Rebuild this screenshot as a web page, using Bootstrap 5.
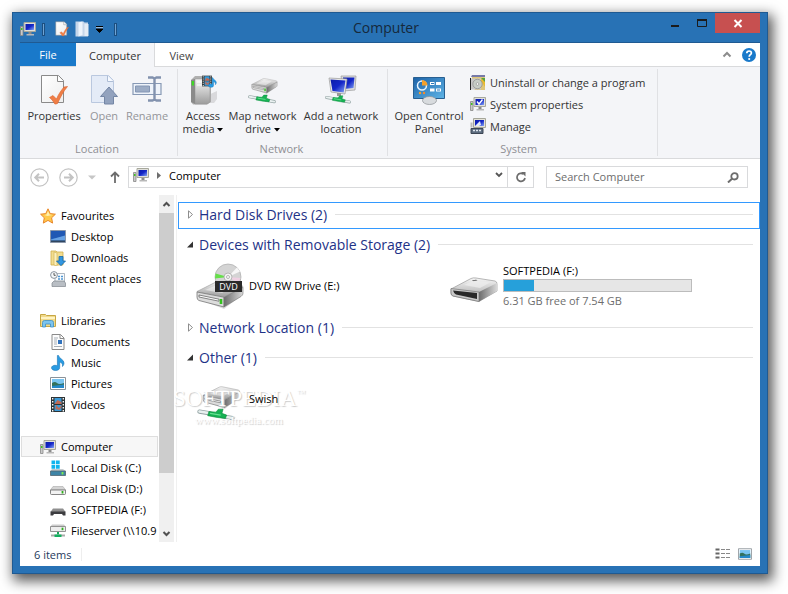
<!DOCTYPE html>
<html lang="en">
<head>
<meta charset="utf-8">
<meta name="viewport" content="width=device-width, initial-scale=1">
<title>Computer</title>
<link href="https://cdn.jsdelivr.net/npm/bootstrap@5.3.0/dist/css/bootstrap.min.css" rel="stylesheet">
<style>
:root{--frame:#2872b5;--frame-dark:#1f5a92;--rule:#d9dadc;--ribbon:#f4f5f8}
body{font:11px/13px "Open Sans","Noto Sans",sans-serif;color:#000;background:#fff;padding:12px 20px 20px 12px}
button{font:inherit;color:inherit;background:none;border:0;padding:0}
a{color:inherit;text-decoration:none}
svg{display:block;flex:none}
.win{min-height:calc(100vh - 33px);background:var(--frame);border:1px solid var(--frame-dark);padding:0 7px 7px;box-shadow:3px 5px 12px 2px rgba(0,0,0,.65)}
.titlebar{height:29px;color:#16293b}
.titlebar h1{font-size:14px;line-height:30px;font-weight:400}
.quick{width:104px;gap:6px}
.sep{width:3px;height:13px;border:1px solid #1c4f80;background:#6fa3d3}
.winbtns{width:112px;height:20px}
.winbtns button{width:27px;height:20px}
.winbtns .close-btn{width:45px;background:#c75050}
.pane{background:#fff;border-top:1px solid var(--frame-dark)}
.tabs{height:24px;border-bottom:1px solid var(--rule)}
.tabs button{height:24px;line-height:26px;color:#444}
.tabs .file{width:56px;background:#1979ca;color:#fff;height:23px;line-height:24px}
.tabs .on{width:79px;background:var(--ribbon);border-right:1px solid var(--rule);color:#333}
.tabs .view{width:53px}
.ribbon{height:92px;background:var(--ribbon);border-bottom:1px solid var(--rule);color:#333;padding-top:2px}
.rgroup{border-right:1px solid #e0e1e4;height:87px;padding:2px 4px 0}
.rgroup .caption{color:#8f8f94;line-height:16px}
.big{display:flex;flex-direction:column;align-items:center;height:70px;padding-top:4px;text-align:center;white-space:nowrap}
.big svg{margin-bottom:4px}
.big:disabled{color:#939499}
.w-s{width:46px}.w-m{width:60px}.w-l{width:74px}.w-n{width:73px}.w-xl{width:84px}.w-open{width:40px}
.g-loc{padding-right:7px}.g-net{padding-left:2px}.g-sys{padding-right:12px}
.line-btn{display:flex;align-items:center;gap:4px;height:22px;white-space:nowrap}
.location{height:36px;padding:0 12px 0 10px}
.field{height:22px;border:1px solid var(--rule);background:#fff}
.refresh{width:26px;padding-left:8px}
.searchbox{width:202px;margin-left:12px}
.searchbox input{border:0;outline:0;min-width:0;padding:0 0 0 8px;color:#555;line-height:18px}
.searchbox input::placeholder{color:#6d6d6d;opacity:1}
.navicons{width:98px;gap:10px}
.tree{width:138px;padding:10px 0 0 1px;height:347px;overflow:hidden}
.tree a{display:flex;align-items:center;height:21px;gap:5px;padding-left:18px;white-space:nowrap;border:1px solid transparent}
.tree a.sub{padding-left:28px}
.tree a.picked{background:#f7f7f7;border-color:#dedede}
.tree .block{margin-bottom:21px}
.scroller{width:15px;background:#f0f0f0;margin-left:1px}
.scroller button{height:18px;width:15px}
.thumb{background:#cdcdcd;height:75%}
.files{border-left:1px solid #f0f0f0;margin-left:2px;padding:7px 0 0 1px}
.ghead{height:27px;margin-bottom:3px;padding:0 6px 2px 7px;border:1px solid transparent;width:100%;gap:4px;color:#1e3287;font-size:14px;white-space:nowrap}
.ghead::after{content:"";height:1px;flex:1;background:#e2e2e2;margin-left:4px}
.ghead.focused{border-color:#3399ff}
.ghead svg{width:9px}
.items{height:53px;padding:0 0 6px 18px}
.tile{width:254px;gap:5px}
.tile .pic{width:48px}
.drive-info{gap:2px}
.meter{width:189px;height:13px;border:1px solid #bcbcbc;background:#e6e6e6;border-radius:0}
.meter .progress-bar{background:#26a0da}
.muted{color:#6d6d6d}
.stamp{left:-23px;top:1px;width:140px;color:#fff;text-shadow:1px 1px 1px #ccc;font-family:"Liberation Serif",serif;pointer-events:none}
.stamp b{font-weight:400;font-size:23px;line-height:24px;display:block}
.stamp sup{font-size:9px;top:-10px}
.stamp i{font-style:normal;font-size:11px;line-height:18px;display:block;padding-left:22px}
.status{height:24px;color:#1e395b;padding:0 8px 0 14px}
.status .count{border-right:1px solid #eee;padding-right:10px}
</style>
</head>
<body>
<svg width="0" height="0" class="position-absolute" aria-hidden="true">
<defs>
<linearGradient id="scr" x2="1" y2="1"><stop offset="0" stop-color="#0c1ca8"/><stop offset=".5" stop-color="#1426c8"/><stop offset="1" stop-color="#86a6f4"/></linearGradient>
<linearGradient id="metal" x2="0" y2="1"><stop offset="0" stop-color="#f6f6f6"/><stop offset="1" stop-color="#9c9c9c"/></linearGradient>
<linearGradient id="side" x2="1"><stop offset="0" stop-color="#6d6d6d"/><stop offset="1" stop-color="#d8d8d8"/></linearGradient>
<linearGradient id="blue" x2="1" y2="1"><stop offset="0" stop-color="#1c62a8"/><stop offset="1" stop-color="#5fb4e6"/></linearGradient>
<linearGradient id="page" x2="1" y2="1"><stop offset="0" stop-color="#fff"/><stop offset="1" stop-color="#eee"/></linearGradient>
<symbol id="pc" viewBox="0 0 16 14"><path d="M4 .5h11.500v9H4z" fill="#e0e0dc" stroke="#a7a89c"/><path d="M5.500 2h8.500v6H5.500z" fill="url(#scr)"/><path d="M8.500 10h3v2h-3z" fill="#8b8b8b"/><path d="M6.500 12h7.500v1.500H6.500z" fill="#b8b8b8"/><path d="M.5 4.500h2.500v9H.5z" fill="#c9c9c9" stroke="#888" stroke-width=".8"/><path d="M1 6h1.500v2H1z" fill="#42c522"/></symbol>
<symbol id="doccheck" viewBox="0 0 28 30"><path d="M1.500.5h17l5 5V27.500h-22z" fill="url(#page)" stroke="#8a8a8a"/><path d="M17.500 1v5.500h5.500" fill="#fff" stroke="#8a8a8a"/><path d="M9.500 22.500l3.500-2 3.500 3.500c2-5 5-9 7.500-12l3.500-.5C23 17 20.500 22 17.500 28.500c-2.500 1-3 .5-3 0-1.500-2.500-3-4.500-5-6z" fill="#ef7e46" stroke="#dc622c" stroke-width=".6"/></symbol>
<symbol id="open" viewBox="0 0 28 30"><path d="M1.500.5h17l5 5V27.500h-22z" fill="#e4ebf7" stroke="#bac8df"/><path d="M17.500 1v5.500h5.500" fill="#f7faff" stroke="#aebdd5"/><path d="M19 12l8.500 9.500h-4V29h-9v-7.500h-4z" fill="#92a2be" stroke="#7486a5"/></symbol>
<symbol id="rename" viewBox="0 0 30 28"><path d="M1 7.500h28v11H1z" fill="#eef3fa" stroke="#8799b5" stroke-width="1.200"/><path d="M3.500 10h14v6h-14z" fill="#9cacc5" stroke="#8496b4"/><path d="M16 1.500h4.500l2 1 2-1H29M16 24.500h4.500l2-1 2 1H29M22.500 2v22" fill="none" stroke="#8292ae" stroke-width="2.400"/></symbol>
<symbol id="note" viewBox="0 0 14 16"><path d="M7.500.5c.5 3 5.500 4 5.500 7.500 0 1.500-.8 2.800-1.500 3.500.4-2.800-.8-4-2.800-4.500v5.500C8.700 14.500 7 15.500 4.500 15.500S.5 14.200.5 12.800 2.200 10.300 4 10.300c1 0 1.800.2 2.400.5V.5z" fill="#299be2" stroke="#1573b6" stroke-width=".6"/></symbol>
<symbol id="film" viewBox="0 0 14 15"><path d="M0 0h14v15H0z" fill="#2d3436"/><path d="M3.500 1h7v6h-7zM3.500 8h7v6h-7z" fill="#3b9ad8"/><path d="M3.500 7l3-4 4 2v2zM5 8l3 3 2.500-3v2l-2 3-4-1z" fill="#c06a55"/><path d="M1.700 1v14M12.300 1v14" stroke="#fff" stroke-width="1.300" stroke-dasharray="1.500 1.500"/></symbol>
<symbol id="media" viewBox="0 0 30 30"><path d="M3 28h23l3-4v-8z" fill="#888" opacity=".25"/><path d="M3 5l4-4h14l2 1v25l-4 2.500H5L3 27z" fill="#b0b0b0"/><path d="M7 4h13l2 2v21l-3 2H7z" fill="url(#metal)" stroke="#999" stroke-width=".6"/><path d="M3 5l4-1v25l-4-2z" fill="#8a8a8a"/><path d="M9 7h6M9 10h10" stroke="#fff"/><path d="M4.800 6v4.500" stroke="#3cdb22" stroke-width="2.200"/><use href="#film" x="14" y="0" width="10" height="12"/><use href="#note" x="20" y="1" width="9" height="13"/></symbol>
<symbol id="pipe" viewBox="0 0 32 11"><path d="M2 3l9 1.500M21 7l9 1.500" stroke="#93a3a3" stroke-width="3.600" stroke-linecap="round"/><path d="M2 3l9 1.500M21 7l9 1.500" stroke="#e9f0f0" stroke-width="2.200" stroke-linecap="round"/><path d="M10 3l6 .5 2-2.500h4l-1 3.500 4 1.500-1 2.800-7-.8-8-1.500z" fill="#17b254" stroke="#0a8c3c" stroke-width=".5"/><path d="M11 4.500l9 1.500" stroke="#6ae294"/></symbol>
<symbol id="drive" viewBox="0 0 48 29"><path d="M2 19l26 10 18-14v-5L28 22z" fill="#777" opacity=".25"/><path d="M1 11.500L21 1.500q2-1 4-.5l20 4q2 .5 2 2.500L28 17 1 12z" fill="url(#metal)" stroke="#a2a2a2" stroke-width=".7"/><path d="M1 12l27 5.200V27L3 20.500Q1 20 1 17z" fill="#dcdcdc" stroke="#777" stroke-width=".8"/><path d="M28 17.200L47 7.500v6Q47 15 45 16.500L28 27z" fill="url(#side)" stroke="#777" stroke-width=".6"/><path d="M3 15l20 4.200v2L3 17z" fill="#fff" stroke="#555" stroke-width=".7"/><path d="M25 19v5" stroke="#35c31e" stroke-width="2.600"/><path d="M9 10L23 4l14 2.500L26 13z" fill="#fff" opacity=".45"/></symbol>
<symbol id="netdrive" viewBox="0 0 30 30"><use href="#drive" x="3" y="3" width="27" height="16"/><use href="#pipe" x="0" y="19" width="28" height="10"/></symbol>
<symbol id="netpc" viewBox="0 0 34 30"><path d="M17 1h15l-1 14-12 1z" fill="#dedede" stroke="#999" stroke-width=".7"/><path d="M19 2.500h11.500l-1 10.500-10 1z" fill="url(#scr)"/><path d="M5 3l18 1-2 15-14-2z" fill="#e8e8e8" stroke="#999" stroke-width=".7"/><path d="M6.500 4.500l15 1-1.800 12L8.500 16z" fill="url(#scr)"/><path d="M13 18h4v3h-4z" fill="#999"/><use href="#pipe" x="0" y="20" width="28" height="9"/></symbol>
<symbol id="panel" viewBox="0 -2 32 30"><path d="M.5.5h31V21.500H.5z" fill="url(#blue)" stroke="#285f91"/><circle cx="9" cy="8.500" r="4.500" fill="none" stroke="#e7f4ff" stroke-width="1.500"/><path d="M9 8.500V3a5.500 5.500 0 0 1 5.500 5.500z" fill="#f5a02a"/><path d="M17 6.500h4.500M23 6.500h5M17 13h4.500M23 13h5" stroke="#fff" stroke-width="3"/><path d="M18 6.500h3M24 13h3" stroke="#2a76b8" stroke-width="1.200"/><circle cx="7" cy="16" r="1.200" fill="#f5a02a"/><circle cx="11" cy="16" r="1.200" fill="#f58b2a"/><ellipse cx="16.500" cy="23.500" rx="7" ry="4" fill="#d8dbde" stroke="#8b8f93" stroke-width=".7"/></symbol>
<symbol id="uninst" viewBox="0 0 16 16"><path d="M2 1h12l1 3v12H5L2 12z" fill="#dfc67a"/><path d="M2 1h13v2H1z" fill="#777aa8"/><path d="M10 5h5v8z" fill="#e8ba31"/><path d="M11 4l4 4v-4z" fill="#57a340"/><path d="M1 4.500h10v11H1z" fill="#c9c9c9"/><path d="M.5 4v12" stroke="#222"/><circle cx="7.500" cy="10" r="4.700" fill="#c6ccc6" stroke="#888" stroke-width=".7"/><circle cx="7.500" cy="10" r="1.300" fill="#fff" stroke="#777" stroke-width=".5"/></symbol>
<symbol id="sysprop" viewBox="0 0 16 14"><use href="#pc" width="16" height="14"/><path d="M7 4.500l2 2.500 3.500-4.500" fill="none" stroke="#fff" stroke-width="1.400"/></symbol>
<symbol id="manage" viewBox="0 0 16 16"><path d="M3.500.5h12v9h-12z" fill="#e4e2d6" stroke="#a5a69a"/><path d="M5 2h9v6H5z" fill="url(#scr)"/><path d="M5 8l5-5 1 4-2 1z" fill="#e4ebf8"/><path d="M.5 4.500h2v5h-2z" fill="#bbb"/><path d="M1 10.500h12V15.500H1z" fill="#5d6d80" stroke="#3c4654"/><path d="M3 12.500h8" stroke="#e0e6ee" stroke-width="1.500" stroke-dasharray="2 1"/></symbol>
<symbol id="star" viewBox="0 0 16 16"><path d="M8 .8l2.200 4.800 5.200.6-3.800 3.600 1 5.300L8 12.400l-4.700 2.700 1-5.300L.6 6.200l5.200-.6z" fill="#ffc94a" stroke="#e8862a"/><path d="M8 3l1.500 3.500 3 .5-5 1-3-1 2-.5z" fill="#fff0b0"/></symbol>
<symbol id="desk" viewBox="0 0 16 13"><path d="M.5.5h15v12H.5z" fill="#2c6fc4" stroke="#8a97ab"/><path d="M1 1h14v5L1 9z" fill="#2058b4"/><path d="M1 9.500l14-4v5H1z" fill="#68a2e4"/><path d="M1 10.500h14v1.500H1z" fill="#30465f"/></symbol>
<symbol id="down" viewBox="0 0 16 16"><path d="M1 1h5l1 1h6v13H1z" fill="#f2dd90" stroke="#cfae4c" stroke-width=".8"/><path d="M4 2v13l3 1V3z" fill="#fbf0bf" stroke="#cfae4c" stroke-width=".6"/><path d="M9 6.500h4V11h2.500L11 15.700 6.500 11H9z" fill="#3296e0" stroke="#1768a8" stroke-width=".8"/></symbol>
<symbol id="recent" viewBox="0 0 16 16"><path d="M5 2.500h9.500v11H5z" fill="#f8fbfe" stroke="#9aa5b0" stroke-width=".8"/><path d="M8 5.500h2M11 5.500h2M8 8h2M11 8h2" stroke="#4e96d2" stroke-width="1.500"/><path d="M2 12l2-2h10l1.500 2v3.500H2z" fill="#b9bec4" stroke="#7f868e" stroke-width=".7"/><circle cx="4" cy="4" r="3.400" fill="#f5f8fa" stroke="#8a949e"/><path d="M4 2v2.300h1.700" fill="none" stroke="#555"/></symbol>
<symbol id="lib" viewBox="0 0 16 15"><path d="M.5 1.500h5l1 1h9v11H.5z" fill="#f0d98a" stroke="#c7a744"/><path d="M1 5h14" stroke="#fff3c2" stroke-width="2"/><path d="M2.500 14V9.500q0-2 2-2h7q2 0 2 2V14h-3v-3h-5v3z" fill="#7cc4ee" stroke="#3e8fc6" stroke-width=".8"/></symbol>
<symbol id="docs" viewBox="0 0 14 16"><path d="M1 .5h8.500l3.500 3.500v11.500H1z" fill="#fcfcfc" stroke="#8a8a8a"/><path d="M9 .5V4.500h4" fill="none" stroke="#8a8a8a"/><path d="M3 4h4M3 6h3M3 8h3M3 10h3M3 12.500h8" stroke="#a8b0b8"/><path d="M7 6h4v4H7z" fill="#2f72bd"/></symbol>
<symbol id="pics" viewBox="0 0 16 13"><path d="M.5.5h15v12H.5z" fill="#fff" stroke="#8b9299"/><path d="M2 2h12v9H2z" fill="#79c4f0"/><path d="M2 6q3-2 5 0t7 0v5H2z" fill="#33715c"/><path d="M2 9l12-1.500V11H2z" fill="#2488c9"/></symbol>
<symbol id="hdd" viewBox="0 0 16 9"><path d="M3 .5h10l2.500 3.500H.5z" fill="#d4d4d4" stroke="#aaa" stroke-width=".6"/><path d="M.5 4h15v3.500q0 1-1 1h-13q-1 0-1-1z" fill="#f2f2f2" stroke="#777" stroke-width=".9"/><path d="M12.500 5v2.500" stroke="#2fae1c" stroke-width="1.800"/></symbol>
<symbol id="hddc" viewBox="0 0 16 16"><path d="M1.500.5h3.700v3.700H1.500zM6 .5h3.700v3.700H6zM1.500 5h3.700v3.700H1.500zM6 5h3.700v3.700H6z" fill="#10b4ee"/><path d="M2 9h11l2.500 2H.5z" fill="#c5ccd0"/><path d="M.5 11h15v4.500H.5z" fill="#3e84a6" stroke="#526470" stroke-width=".8"/><path d="M12.500 12v2.500" stroke="#7ef04e" stroke-width="1.800"/></symbol>
<symbol id="usb" viewBox="0 0 16 8"><path d="M3 .5h10L15.500 4H.5z" fill="#8f8f8f"/><path d="M.5 3.500h15v4H13l-1-1.500H4L3 7.500H.5z" fill="#3d3d40"/></symbol>
<symbol id="server" viewBox="0 0 16 14"><path d="M2 .5h12l1.500 2H.5z" fill="#ccc"/><path d="M.5 2.500h15v5H.5z" fill="#eee" stroke="#888" stroke-width=".9"/><path d="M12.500 3.700v2.500" stroke="#2fae1c" stroke-width="1.800"/><path d="M7 8h2v2.500H7z" fill="#17a65a"/><path d="M1 11.500h14" stroke="#aaa" stroke-width="2"/><path d="M4.500 10.500h7v2.500h-7z" fill="#14b060"/></symbol>
</defs>
</svg>

<div class="win d-flex flex-column">
  <header class="titlebar d-flex justify-content-between align-items-start">
    <div class="quick d-flex align-items-center pt-2">
      <svg width="16" height="14"><use href="#pc"/></svg>
      <span class="sep"></span>
      <button aria-label="Properties" class="ms-1"><svg width="14" height="16"><use href="#doccheck"/></svg></button>
      <button aria-label="New folder"><svg width="14" height="16" viewBox="0 0 14 16"><path d="M.5.500h8l1 1h3.500v14H.5z" fill="#c6d6ea"/><path d="M3.500 1.500l4-1V14l-4 1.500z" fill="#edf4fc"/><path d="M9.500 3h4v12h-4z" fill="#e4ecf5"/></svg></button>
      <button aria-label="Customize"><svg width="9" height="8" viewBox="0 0 9 8"><path d="M1 1.500h7M1 4h7L4.500 7.500z" fill="#000" stroke="#000"/><path d="M1 2.700h7" stroke="#d6e4f1" stroke-width=".8"/></svg></button>
      <span class="sep ms-1"></span>
    </div>
    <h1 class="m-0">Computer</h1>
    <div class="winbtns d-flex justify-content-end">
      <button aria-label="Minimize"><svg width="27" height="20"><path d="M10 13h8" stroke="#1b1b1b" stroke-width="2"/></svg></button>
      <button aria-label="Maximize"><svg width="27" height="20"><path d="M9.500 7.500h9v6h-9z" fill="none" stroke="#1b1b1b"/><path d="M9 7h10" stroke="#1b1b1b" stroke-width="2"/></svg></button>
      <button aria-label="Close" class="close-btn"><svg width="45" height="20"><path d="M19.500 7l7 7m0-7l-7 7" stroke="#fff" stroke-width="2"/></svg></button>
    </div>
  </header>

  <div class="pane flex-grow-1 d-flex flex-column">
    <div class="tabs d-flex">
      <button class="file">File</button>
      <button class="on">Computer</button>
      <button class="view">View</button>
      <div class="ms-auto d-flex align-items-center pe-1">
        <button aria-label="Collapse ribbon"><svg width="12" height="10"><path d="M1.500 6.500L5 3l3.500 3.500" fill="none" stroke="#8c8c8c" stroke-width="2"/></svg></button>
        <button aria-label="Help" class="ms-2"><svg width="14" height="14"><circle cx="7" cy="7" r="7" fill="#1979ca"/><path d="M4.800 5.300C4.800 2.300 9.400 2.300 9.400 5c0 1.700-2.200 1.800-2.200 3.800" fill="none" stroke="#fff" stroke-width="1.700"/><circle cx="7.200" cy="11" r="1.100" fill="#fff"/></svg></button>
      </div>
    </div>

    <div class="ribbon d-flex">
      <section class="rgroup g-loc">
        <div class="d-flex">
          <button class="big w-m"><svg width="28" height="30"><use href="#doccheck"/></svg>Properties</button>
          <button class="big w-open" disabled><svg width="28" height="30"><use href="#open"/></svg>Open</button>
          <button class="big w-s" disabled><svg width="30" height="30"><use href="#rename"/></svg>Rename</button>
        </div>
        <div class="caption text-center">Location</div>
      </section>
      <section class="rgroup g-net">
        <div class="d-flex">
          <button class="big w-s"><svg width="30" height="30"><use href="#media"/></svg>Access<span>media <svg class="d-inline-block m-0 align-middle" width="6" height="4"><path d="M0 0h6L3 3.500z"/></svg></span></button>
          <button class="big w-n"><svg width="30" height="30"><use href="#netdrive"/></svg>Map network<span>drive <svg class="d-inline-block m-0 align-middle" width="6" height="4"><path d="M0 0h6L3 3.500z"/></svg></span></button>
          <button class="big w-xl"><svg width="34" height="30"><use href="#netpc"/></svg>Add a network<span>location</span></button>
        </div>
        <div class="caption text-center">Network</div>
      </section>
      <section class="rgroup g-sys">
        <div class="d-flex">
          <button class="big w-l me-1"><svg width="32" height="30"><use href="#panel"/></svg>Open Control<span>Panel</span></button>
          <div>
            <button class="line-btn"><svg width="16" height="16"><use href="#uninst"/></svg>Uninstall or change a program</button>
            <button class="line-btn"><svg width="16" height="14"><use href="#sysprop"/></svg>System properties</button>
            <button class="line-btn"><svg width="16" height="16"><use href="#manage"/></svg>Manage</button>
          </div>
        </div>
        <div class="caption text-center">System</div>
      </section>
    </div>

    <div class="location d-flex align-items-center">
      <div class="navicons d-flex align-items-center">
        <button aria-label="Back"><svg width="19" height="19" fill="none" stroke="#c3c3c3"><circle cx="9.500" cy="9.500" r="8.700" stroke-width="1.200"/><path d="M14 9.500H6M9 5.800L5.300 9.500 9 13.200" stroke-width="2"/></svg></button>
        <button aria-label="Forward"><svg width="19" height="19" fill="none" stroke="#c3c3c3"><circle cx="9.500" cy="9.500" r="8.700" stroke-width="1.200"/><path d="M5 9.500h8M10 5.800l3.700 3.700-3.700 3.700" stroke-width="2"/></svg></button>
        <button aria-label="Recent locations"><svg width="8" height="5"><path d="M0 .500h8L4 4.500z" fill="#c6c6c6"/></svg></button>
        <button aria-label="Up" class="ms-1"><svg width="10" height="12"><path d="M5 12V2M1 5.500L5 1.500l4 4" fill="none" stroke="#6d6d6d" stroke-width="1.800"/></svg></button>
      </div>
      <div class="field flex-grow-1 d-flex align-items-center pb-1">
        <svg width="16" height="14" class="mx-1"><use href="#pc"/></svg>
        <svg width="4" height="7" class="ms-1"><path d="M0 0l4 3.500L0 7z" fill="#6d6d6d"/></svg>
        <span class="ms-2">Computer</span>
        <button aria-label="Previous locations" class="ms-auto me-1"><svg width="8" height="6"><path d="M1 1l3 3 3-3" fill="none" stroke="#555" stroke-width="1.800"/></svg></button>
      </div>
      <button aria-label="Refresh" class="field refresh border-start-0"><svg width="10" height="11"><path d="M7.500 2.200A4 4 0 1 0 9 6" fill="none" stroke="#6d6d6d" stroke-width="1.700"/><path d="M5 0h4.500v4.500z" fill="#6d6d6d"/></svg></button>
      <div class="field searchbox d-flex align-items-center pe-2">
        <input type="text" class="flex-grow-1" placeholder="Search Computer" aria-label="Search Computer">
        <svg width="12" height="11" fill="none" stroke="#6d6d6d"><circle cx="7.500" cy="4.300" r="3.200" stroke-width="1.800"/><path d="M5 6.800L1 10.500" stroke-width="2"/></svg>
      </div>
    </div>

    <div class="d-flex flex-grow-1">
      <nav class="tree">
        <div class="block">
          <a href="#"><svg width="16" height="16"><use href="#star"/></svg>Favourites</a>
          <a href="#" class="sub"><svg width="16" height="13"><use href="#desk"/></svg>Desktop</a>
          <a href="#" class="sub"><svg width="16" height="16"><use href="#down"/></svg>Downloads</a>
          <a href="#" class="sub"><svg width="16" height="16"><use href="#recent"/></svg>Recent places</a>
        </div>
        <div class="block">
          <a href="#"><svg width="16" height="15"><use href="#lib"/></svg>Libraries</a>
          <a href="#" class="sub"><svg width="16" height="16"><use href="#docs"/></svg>Documents</a>
          <a href="#" class="sub"><svg width="16" height="16"><use href="#note"/></svg>Music</a>
          <a href="#" class="sub"><svg width="16" height="13"><use href="#pics"/></svg>Pictures</a>
          <a href="#" class="sub"><svg width="16" height="15"><use href="#film"/></svg>Videos</a>
        </div>
        <div>
          <a href="#" class="picked"><svg width="16" height="14"><use href="#pc"/></svg>Computer</a>
          <a href="#" class="sub"><svg width="16" height="16"><use href="#hddc"/></svg>Local Disk (C:)</a>
          <a href="#" class="sub"><svg width="16" height="9" class="mt-1"><use href="#hdd"/></svg>Local Disk (D:)</a>
          <a href="#" class="sub"><svg width="16" height="8" class="mt-1"><use href="#usb"/></svg>SOFTPEDIA (F:)</a>
          <a href="#" class="sub"><svg width="16" height="14"><use href="#server"/></svg>Fileserver (\\10.9</a>
        </div>
      </nav>
      <div class="scroller d-flex flex-column">
        <button aria-label="Scroll up"><svg width="15" height="18"><path d="M4.500 11L7.500 8l3 3" fill="none" stroke="#505050" stroke-width="2"/></svg></button>
        <div class="thumb"></div>
        <button aria-label="Scroll down" class="mt-auto"><svg width="15" height="18"><path d="M4.500 8l3 3 3-3" fill="none" stroke="#505050" stroke-width="2"/></svg></button>
      </div>
      <main class="files flex-grow-1">
        <button class="ghead focused d-flex align-items-center"><svg height="9"><path d="M2.500.8l4 3.700-4 3.700z" fill="#fff" stroke="#8d8d8d"/></svg>Hard Disk Drives (2)</button>
        <button class="ghead d-flex align-items-center"><svg height="9"><path d="M7 1.500v6H1z" fill="#333"/></svg>Devices with Removable Storage (2)</button>
        <div class="items d-flex align-items-center">
          <div class="tile d-flex align-items-center">
            <svg class="pic" height="46" viewBox="0 0 48 46"><use href="#drive" y="17" width="48" height="29"/><circle cx="32" cy="14" r="13" fill="#d4d4d4" stroke="#aaa" stroke-width=".7"/><path d="M32 14L19.500 10.500l-.5 5z" fill="#65df49"/><path d="M32 14L41 4.500l3 4z" fill="#f7f7f7"/><path d="M32 14l12.500 1-2 5z" fill="#efd0e2"/><circle cx="32" cy="14" r="4" fill="#f3f3f3" stroke="#aaa" stroke-width=".8"/><circle cx="32" cy="14" r="1.500" fill="#fff" stroke="#888" stroke-width=".6"/><path d="M19 18h27v11H19z" fill="#2a2a2a"/><text x="32.500" y="27" font-size="9" fill="#fff" text-anchor="middle">DVD</text></svg>
            <span>DVD RW Drive (E:)</span>
          </div>
          <div class="tile d-flex align-items-center">
            <svg class="pic" height="34" viewBox="0 0 48 34"><path d="M1 20L21 9.500q2-1 5-.5l19 3q2 .5 2 3V22L29 32.500 3 27q-2-1-2-3z" fill="url(#metal)" stroke="#999" stroke-width=".7"/><path d="M29 23l18-9v8L29 32.500z" fill="url(#side)"/><path d="M1 19.500L29 23v9.500L3 27q-2-.5-2-3z" fill="#c9c9c9" stroke="#777" stroke-width=".7"/><path d="M3 21.500l24 2.500v6L6 25.500q-2-.8-3-4z" fill="#292929"/><path d="M22 11.500l4-.8 1.500.5-4 1z" fill="#333"/><path d="M14 16l10-4.500 16 2L30 19z" fill="#eee" opacity=".7"/></svg>
            <div class="drive-info d-flex flex-column">
              <span>SOFTPEDIA (F:)</span>
              <div class="progress meter" role="progressbar" aria-label="Space used" aria-valuenow="16" aria-valuemin="0" aria-valuemax="100"><div class="progress-bar" style="width:16%"></div></div>
              <span class="muted">6.31 GB free of 7.54 GB</span>
            </div>
          </div>
        </div>
        <button class="ghead d-flex align-items-center"><svg height="9"><path d="M2.500.8l4 3.700-4 3.700z" fill="#fff" stroke="#8d8d8d"/></svg>Network Location (1)</button>
        <button class="ghead d-flex align-items-center"><svg height="9"><path d="M7 1.500v6H1z" fill="#333"/></svg>Other (1)</button>
        <div class="items d-flex align-items-center">
          <div class="tile d-flex align-items-center position-relative">
            <svg class="pic" height="26" viewBox="0 0 48 26" overflow="visible"><use href="#drive" x="6" y="0" width="39" height="23"/><use href="#pipe" x="0" y="22" width="40" height="13"/></svg>
            <div class="stamp position-absolute" aria-hidden="true"><b>SOFTPEDIA<sup>™</sup></b><i>www.softpedia.com</i></div>
            <span class="position-relative">Swish</span>
          </div>
        </div>
      </main>
    </div>

    <footer class="status d-flex align-items-center">
      <span class="count">6 items</span>
      <button aria-label="Details view" class="ms-auto me-2"><svg width="15" height="12"><path d="M.500 1.500h4M.500 5.500h4M.500 9.500h4" stroke="#666" stroke-width="2"/><path d="M6 1.500h9M6 5.500h9M6 9.500h9" stroke="#888" stroke-dasharray="4 1"/></svg></button>
      <button aria-label="Large icons view"><svg width="14" height="12"><use href="#pics"/></svg></button>
    </footer>
  </div>
</div>
<script src="https://cdn.jsdelivr.net/npm/bootstrap@5.3.0/dist/js/bootstrap.bundle.min.js"></script>
</body>
</html>
